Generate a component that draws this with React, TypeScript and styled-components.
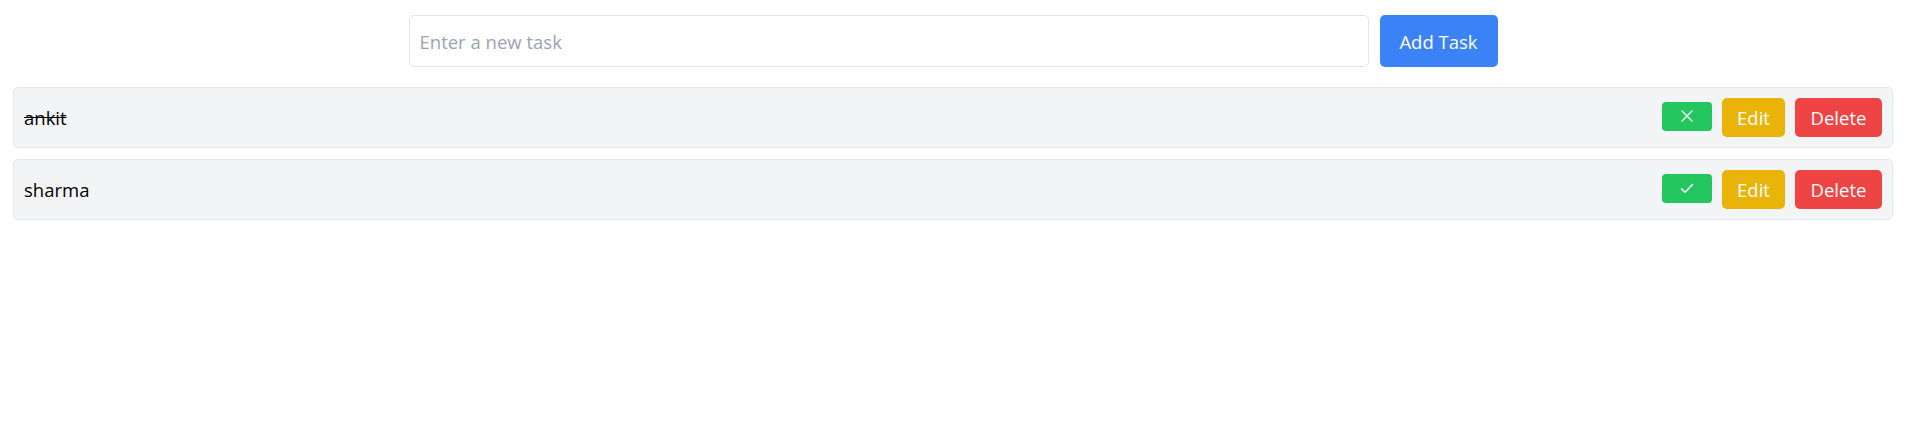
import React, { useState } from "react";
import styled, { createGlobalStyle } from "styled-components";

const GlobalStyle = createGlobalStyle`
  * { box-sizing: border-box; }
  html, body { margin: 0; padding: 0; background: #ffffff; }
  body { font-family: "Open Sans", "Noto Sans", Arial, sans-serif; color: #000; }
`;

const Page = styled.div`
  padding: 15px 19px 0 13px;
`;

const Form = styled.form`
  display: flex;
  justify-content: center;
  gap: 11px;
  margin-bottom: 20px;
`;

const Input = styled.input`
  width: 960px;
  height: 52px;
  padding: 0 10px;
  border: 1px solid #e3e5e8;
  border-radius: 5px;
  font-family: inherit;
  font-size: 18.5px;
  color: #111827;
  outline: none;
  &::placeholder { color: #9ca3af; }
`;

const Button = styled.button<{ $bg: string; $w: number; $h: number }>`
  display: inline-flex;
  align-items: center;
  justify-content: center;
  width: ${(p) => p.$w}px;
  height: ${(p) => p.$h}px;
  padding: 0;
  border: none;
  border-radius: 5px;
  background: ${(p) => p.$bg};
  color: #ffffff;
  font-family: inherit;
  font-size: 18.5px;
  cursor: pointer;
`;

const ToggleButton = styled(Button)`
  border-radius: 4px;
  margin-bottom: 3px;
`;

const List = styled.ul`
  list-style: none;
  margin: 0;
  padding: 0;
  display: flex;
  flex-direction: column;
  gap: 11px;
`;

const Row = styled.li`
  display: flex;
  align-items: center;
  justify-content: space-between;
  height: 61px;
  padding: 0 10px;
  background: #f3f4f6;
  border: 1px solid #e5e7eb;
  border-radius: 5px;
`;

const TaskText = styled.span<{ $done: boolean }>`
  font-size: 18.5px;
  color: #000;
  text-decoration: ${(p) => (p.$done ? "line-through" : "none")};
`;

const Actions = styled.div`
  display: flex;
  align-items: center;
  gap: 10px;
`;

const XIcon = () => (
  <svg width="12" height="12" viewBox="0 0 12 12" fill="none" stroke="#fff" strokeWidth="1.4" strokeLinecap="round">
    <path d="M1 1 L11 11 M11 1 L1 11" />
  </svg>
);

const CheckIcon = () => (
  <svg width="14" height="11" viewBox="0 0 14 11" fill="none" stroke="#fff" strokeWidth="1.6" strokeLinecap="round" strokeLinejoin="round">
    <path d="M1.5 5.8 L5 9.2 L12.5 1.5" />
  </svg>
);

type Task = { id: number; text: string; done: boolean };

export default function App() {
  const [value, setValue] = useState("");
  const [tasks] = useState<Task[]>([
    { id: 1, text: "ankit", done: true },
    { id: 2, text: "sharma", done: false },
  ]);

  return (
    <>
      <GlobalStyle />
      <Page>
        <Form onSubmit={(e) => e.preventDefault()}>
          <Input
            placeholder="Enter a new task"
            value={value}
            onChange={(e) => setValue(e.target.value)}
          />
          <Button type="submit" $bg="#3b82f6" $w={118} $h={52}>
            Add Task
          </Button>
        </Form>
        <List>
          {tasks.map((t) => (
            <Row key={t.id}>
              <TaskText $done={t.done}>{t.text}</TaskText>
              <Actions>
                <ToggleButton $bg="#22c55e" $w={50} $h={29}>
                  {t.done ? <XIcon /> : <CheckIcon />}
                </ToggleButton>
                <Button $bg="#eab308" $w={63} $h={39}>Edit</Button>
                <Button $bg="#ef4444" $w={87} $h={39}>Delete</Button>
              </Actions>
            </Row>
          ))}
        </List>
      </Page>
    </>
  );
}
